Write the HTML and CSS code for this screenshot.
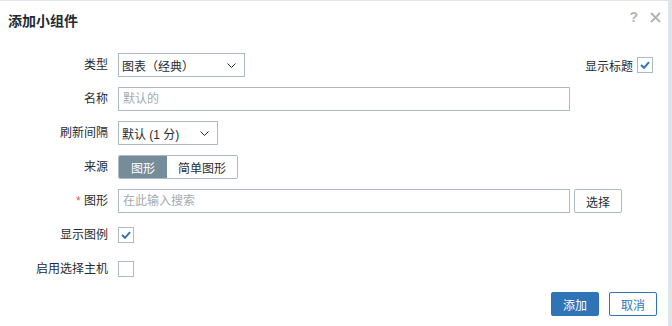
FILE: index.html
```html
<!DOCTYPE html>
<html lang="zh-CN">

<head>
  <meta charset="UTF-8" />
  <title>添加小组件</title>
  <link rel="stylesheet" href="styles.css">
</head>

<body>
  <!-- 弹出对话框 -->
  <div class="dialog">
    <div class="dialog-head">
      <h4 class="dialog-title">添加小组件</h4>
      <div class="dialog-tools">
        <span class="tool-help">?</span>
        <svg class="tool-close" width="11" height="11" viewBox="0 0 11 11">
          <path d="M1 1L10 10M10 1L1 10" stroke="#b3b3b3" stroke-width="2" fill="none" />
        </svg>
      </div>
    </div>

    <form class="widget-form">
      <!-- 类型 -->
      <div class="form-row">
        <label class="form-label">类型</label>
        <div class="form-field field-split">
          <div class="select select-type">
            <span>图表（经典）</span>
            <svg class="chevron" width="9" height="5" viewBox="0 0 9 5">
              <path d="M0.5 0.5L4.5 4.5L8.5 0.5" stroke="#1f2c33" fill="none" />
            </svg>
          </div>
          <label class="show-header">
            显示标题
            <span class="checkbox is-checked">
              <svg width="10" height="8" viewBox="0 0 10 8">
                <path d="M1 4L4 6.8L9 1.2" stroke="#2f74b6" stroke-width="2" fill="none" />
              </svg>
            </span>
          </label>
        </div>
      </div>

      <!-- 名称 -->
      <div class="form-row">
        <label class="form-label">名称</label>
        <div class="form-field">
          <input class="text-input input-wide" type="text" placeholder="默认的" />
        </div>
      </div>

      <!-- 刷新间隔 -->
      <div class="form-row">
        <label class="form-label">刷新间隔</label>
        <div class="form-field">
          <div class="select select-refresh">
            <span>默认 (1 分)</span>
            <svg class="chevron" width="9" height="5" viewBox="0 0 9 5">
              <path d="M0.5 0.5L4.5 4.5L8.5 0.5" stroke="#1f2c33" fill="none" />
            </svg>
          </div>
        </div>
      </div>

      <!-- 来源 -->
      <div class="form-row">
        <label class="form-label">来源</label>
        <div class="form-field">
          <div class="segmented">
            <span class="seg-item is-on">图形</span>
            <span class="seg-item">简单图形</span>
          </div>
        </div>
      </div>

      <!-- 图形 -->
      <div class="form-row">
        <label class="form-label"><span class="required">*</span> 图形</label>
        <div class="form-field">
          <input class="text-input input-wide" type="text" placeholder="在此输入搜索" />
          <button type="button" class="btn-grey">选择</button>
        </div>
      </div>

      <!-- 显示图例 -->
      <div class="form-row">
        <label class="form-label">显示图例</label>
        <div class="form-field">
          <span class="checkbox is-checked">
            <svg width="10" height="8" viewBox="0 0 10 8">
              <path d="M1 4L4 6.8L9 1.2" stroke="#2f74b6" stroke-width="2" fill="none" />
            </svg>
          </span>
        </div>
      </div>

      <!-- 启用选择主机 -->
      <div class="form-row">
        <label class="form-label">启用选择主机</label>
        <div class="form-field">
          <span class="checkbox"></span>
        </div>
      </div>
    </form>

    <div class="dialog-foot">
      <button type="button" class="btn btn-primary">添加</button>
      <button type="button" class="btn btn-alt">取消</button>
    </div>
  </div>
</body>

</html>
```

FILE: styles.css
```css
/* 页面背景 */
body {
  margin: 0;
  background: #dfe4e8;
  font-family: "Liberation Sans", "Noto Sans CJK SC", sans-serif;
  font-size: 12px;
  color: #1f2c33;
}

/* 对话框 */
.dialog {
  display: flex;
  flex-direction: column;
  width: 668px;
  height: 325px;
  margin-top: 1px;
  background: #fff;
  box-sizing: border-box;
}

/* 标题栏 */
.dialog-head {
  display: flex;
  justify-content: space-between;
  align-items: flex-start;
  height: 52px;
  padding: 11px 7px 0 8px;
  box-sizing: border-box;
}

.dialog-title {
  margin: 0;
  font-size: 14px;
  line-height: 18px;
  font-weight: bold;
  color: #1f2c33;
}

.dialog-tools {
  display: flex;
  align-items: center;
  gap: 12px;
  margin-top: -3px;
}

.tool-help {
  font-size: 14px;
  font-weight: bold;
  color: #b3b3b3;
  line-height: 16px;
}

/* 表单 */
.widget-form {
  display: flex;
  flex-direction: column;
  gap: 10px;
  padding: 0 15px 0 8px;
}

.form-row {
  display: flex;
  align-items: center;
  gap: 10px;
  height: 24px;
}

.form-label {
  width: 100px;
  text-align: right;
  line-height: 24px;
  white-space: nowrap;
}

.required {
  color: #e45959;
}

.form-field {
  display: flex;
  align-items: center;
  gap: 4px;
  flex: 1;
}

.field-split {
  justify-content: space-between;
}

/* 下拉框 */
.select {
  display: flex;
  align-items: center;
  justify-content: space-between;
  height: 24px;
  padding: 0 8px 0 3px;
  border: 1px solid #acbbc2;
  box-sizing: border-box;
  background: #fff;
}

.select-type {
  width: 127px;
}

.select-refresh {
  width: 100px;
}

/* 文本框 */
.text-input {
  height: 24px;
  padding: 0 4px;
  border: 1px solid #acbbc2;
  box-sizing: border-box;
  font-family: inherit;
  font-size: 12px;
  color: #1f2c33;
  outline: none;
}

.text-input::placeholder {
  color: #a3abb0;
}

.input-wide {
  width: 452px;
}

/* 复选框 */
.checkbox {
  display: inline-flex;
  align-items: center;
  justify-content: center;
  width: 16px;
  height: 16px;
  border: 1px solid #acbbc2;
  box-sizing: border-box;
  background: #fff;
}

.show-header {
  display: flex;
  align-items: center;
  gap: 4px;
}

/* 分段按钮 */
.segmented {
  display: flex;
  height: 24px;
  border: 1px solid #acbbc2;
  border-radius: 2px;
  box-sizing: border-box;
  overflow: hidden;
}

.seg-item {
  display: flex;
  align-items: center;
  padding: 0 11px;
  background: #fff;
}

.seg-item.is-on {
  background: #768d99;
  color: #fff;
  padding: 0 12px;
}

.btn-grey {
  height: 24px;
  width: 48px;
  border: 1px solid #acbbc2;
  border-radius: 2px;
  background: #fff;
  font-family: inherit;
  font-size: 12px;
  color: #1f2c33;
}

/* 底部按钮 */
.dialog-foot {
  display: flex;
  justify-content: flex-end;
  gap: 10px;
  margin-top: auto;
  padding: 0 11px 10px 0;
}

.btn {
  width: 48px;
  height: 24px;
  border-radius: 2px;
  font-family: inherit;
  font-size: 12px;
  padding: 0;
}

.btn-primary {
  border: 1px solid #2f74b6;
  background: #2f74b6;
  color: #fff;
}

.btn-alt {
  border: 1px solid #2f74b6;
  background: #fff;
  color: #2f74b6;
}
```
